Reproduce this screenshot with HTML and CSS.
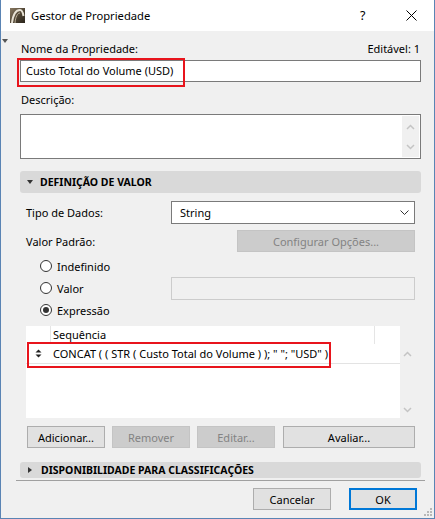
FILE: index.html
```html
<!DOCTYPE html>
<html lang="pt">
<head>
<meta charset="utf-8">
<title>Gestor de Propriedade</title>
<link rel="stylesheet" href="styles.css">
</head>
<body>
<div class="window">
  <div class="titlebar">
    <svg class="app-icon" width="15" height="15" viewBox="0 0 15 15">
      <defs>
        <linearGradient id="ig" x1="0" y1="0" x2="1" y2="1">
          <stop offset="0" stop-color="#8a7a62"/>
          <stop offset="0.6" stop-color="#4a4030"/>
          <stop offset="1" stop-color="#2a241c"/>
        </linearGradient>
      </defs>
      <rect x="0" y="0" width="15" height="15" fill="url(#ig)"/>
      <path d="M2 15 C3 7 6 2 10 2 C12 2 13 5 13.5 8" fill="none" stroke="#e8e2d4" stroke-width="2"/>
      <path d="M5 15 C5.5 9 7.5 5 10 5" fill="none" stroke="#b8ad98" stroke-width="1"/>
    </svg>
    <span class="title">Gestor de Propriedade</span>
    <span class="help">?</span>
    <svg class="close" width="11" height="11" viewBox="0 0 11 11">
      <path d="M0.5 0.5 L10.5 10.5 M10.5 0.5 L0.5 10.5" stroke="#000" stroke-width="1"/>
    </svg>
  </div>

  <div class="content">
    <span class="collapse-tri"></span>

    <div class="label-row">
      <span>Nome da Propriedade:</span>
      <span>Editável: 1</span>
    </div>
    <div class="input">
      <span>Custo Total do Volume (USD)</span>
      <span class="hl hl-name"></span>
    </div>

    <div class="label desc-label">Descrição:</div>
    <div class="textarea">
      <div class="vscroll">
        <svg width="9" height="6" viewBox="0 0 9 6"><path d="M1 5 L4.5 1.5 L8 5" fill="none" stroke="#c4c4c4" stroke-width="1.5"/></svg>
        <svg width="9" height="6" viewBox="0 0 9 6"><path d="M1 1 L4.5 4.5 L8 1" fill="none" stroke="#c4c4c4" stroke-width="1.5"/></svg>
      </div>
    </div>

    <div class="section section-open">
      <span class="tri-down"></span>
      <span>DEFINIÇÃO DE VALOR</span>
    </div>

    <div class="section-body">
      <div class="form-row row-type">
        <span class="form-label">Tipo de Dados:</span>
        <div class="select">
          <span>String</span>
          <svg width="9" height="6" viewBox="0 0 9 6"><path d="M0.5 0.5 L4.5 4.5 L8.5 0.5" fill="none" stroke="#333" stroke-width="1"/></svg>
        </div>
      </div>
      <div class="form-row row-default">
        <span class="form-label">Valor Padrão:</span>
        <span class="btn btn-disabled btn-config">Configurar Opções...</span>
      </div>

      <div class="radios">
        <div class="radio-row">
          <span class="radio-opt"><span class="radio"></span>Indefinido</span>
        </div>
        <div class="radio-row">
          <span class="radio-opt"><span class="radio"></span>Valor</span>
          <span class="field-disabled"></span>
        </div>
        <div class="radio-row">
          <span class="radio-opt"><span class="radio radio-on"></span>Expressão</span>
        </div>
      </div>

      <div class="list">
        <div class="list-main">
          <div class="list-head">
            <span class="col-icon"></span>
            <span class="col-seq">Sequência</span>
            <span class="col-end"></span>
          </div>
          <div class="list-row">
            <span class="col-icon sort">
              <svg width="7" height="9" viewBox="0 0 7 9">
                <path d="M0.5 3.5 L3.5 0.5 L6.5 3.5 Z" fill="#222"/>
                <path d="M0.5 5.5 L3.5 8.5 L6.5 5.5 Z" fill="#222"/>
              </svg>
            </span>
            <span class="col-seq">CONCAT ( ( STR ( Custo Total do Volume ) ); " "; "USD" )</span>
            <span class="hl hl-row"></span>
          </div>
        </div>
        <div class="list-scroll">
          <svg width="9" height="6" viewBox="0 0 9 6"><path d="M1 5 L4.5 1.5 L8 5" fill="none" stroke="#c4c4c4" stroke-width="1.5"/></svg>
          <svg width="9" height="6" viewBox="0 0 9 6"><path d="M1 1 L4.5 4.5 L8 1" fill="none" stroke="#c4c4c4" stroke-width="1.5"/></svg>
        </div>
      </div>

      <div class="btn-row">
        <span class="btn btn-small">Adicionar...</span>
        <span class="btn btn-small btn-disabled">Remover</span>
        <span class="btn btn-small btn-disabled">Editar...</span>
        <span class="btn btn-wide">Avaliar...</span>
      </div>
    </div>

    <div class="section section-closed">
      <span class="tri-right"></span>
      <span>DISPONIBILIDADE PARA CLASSIFICAÇÕES</span>
    </div>

    <div class="separator"></div>

    <div class="footer">
      <span class="btn btn-cancel">Cancelar</span>
      <span class="btn btn-ok">OK</span>
    </div>

    <svg class="grip" width="9" height="9" viewBox="0 0 9 9">
      <rect x="6" y="0" width="2" height="2" fill="#b8b8b8"/>
      <rect x="3" y="3" width="2" height="2" fill="#b8b8b8"/>
      <rect x="6" y="3" width="2" height="2" fill="#b8b8b8"/>
      <rect x="0" y="6" width="2" height="2" fill="#b8b8b8"/>
      <rect x="3" y="6" width="2" height="2" fill="#b8b8b8"/>
      <rect x="6" y="6" width="2" height="2" fill="#b8b8b8"/>
    </svg>
  </div>
</div>
</body>
</html>
```

FILE: styles.css
```css
* { box-sizing: border-box; }

html, body {
  margin: 0;
  padding: 0;
  background: #f0f0f0;
}

body {
  font-family: "Noto Sans", "Open Sans", "DejaVu Sans", sans-serif;
  font-size: 11px;
  color: #000;
}

.window {
  width: 435px;
  height: 519px;
  border-left: 1px solid #5a84b4;
  border-right: 1px solid #5a84b4;
  border-bottom: 1px solid #5a84b4;
  background: #f0f0f0;
  display: flex;
  flex-direction: column;
  overflow: hidden;
}

/* Title bar */
.titlebar {
  height: 31px;
  background: #fff;
  display: flex;
  align-items: center;
  padding-left: 9px;
  flex: none;
}
.app-icon { flex: none; }
.title {
  margin-left: 6px;
  font-size: 11.2px;
  line-height: 16px;
}
.help {
  margin-left: auto;
  font-size: 12.5px;
  width: 10px;
}
.close {
  margin-left: 36px;
  margin-right: 17px;
}

/* Content */
.content {
  position: relative;
  flex: 1;
  padding: 0 13px 0 19px;
  display: flex;
  flex-direction: column;
}

.collapse-tri {
  position: absolute;
  left: 1px;
  top: 8px;
  width: 0;
  height: 0;
  border-left: 3.5px solid transparent;
  border-right: 3.5px solid transparent;
  border-top: 4px solid #555;
}

.label-row {
  margin-top: 10px;
  height: 16px;
  line-height: 16px;
  display: flex;
  justify-content: space-between;
  padding-left: 1px;
  padding-right: 1px;
}

.input {
  position: relative;
  margin-top: 3px;
  height: 22px;
  background: #fff;
  border: 1px solid #7a7a7a;
  padding-left: 5px;
  line-height: 20px;
}

.hl {
  position: absolute;
  border: 2px solid #e8141c;
  pointer-events: none;
}
.hl-name {
  left: -4px;
  top: -3px;
  width: 168px;
  height: 29px;
}

.label {
  height: 16px;
  line-height: 16px;
  padding-left: 1px;
}
.desc-label { margin-top: 10px; }

.textarea {
  margin-top: 6px;
  height: 45px;
  background: #fff;
  border: 1px solid #7a7a7a;
  display: flex;
  justify-content: flex-end;
}
.vscroll {
  width: 17px;
  background: #f0f0f0;
  margin: 1px 1px 1px 0;
  display: flex;
  flex-direction: column;
  justify-content: space-between;
  align-items: center;
  padding: 8px 0 7px;
}

/* Sections */
.section {
  background: #d9d9d9;
  border-radius: 3px;
  display: flex;
  align-items: center;
  font-weight: bold;
  font-size: 10.5px;
  padding-left: 7px;
  gap: 7px;
}
.section-open {
  margin-top: 12px;
  height: 22px;
}
.section-closed {
  margin-top: 14px;
  height: 16px;
}
.tri-down {
  width: 0;
  height: 0;
  border-left: 3.5px solid transparent;
  border-right: 3.5px solid transparent;
  border-top: 4px solid #333;
}
.tri-right {
  width: 0;
  height: 0;
  border-top: 3.5px solid transparent;
  border-bottom: 3.5px solid transparent;
  border-left: 4px solid #333;
  margin-left: 1px;
  margin-right: 2px;
}

.section-body {
  padding: 0 6px;
  display: flex;
  flex-direction: column;
}

.form-row {
  display: flex;
  align-items: center;
}
.form-label { width: 145px; flex: none; }
.row-type { margin-top: 8px; height: 23px; }
.select {
  flex: 1;
  height: 23px;
  background: #fff;
  border: 1px solid #7a7a7a;
  display: flex;
  align-items: center;
  justify-content: space-between;
  padding: 0 5px 0 8px;
}
.row-default {
  margin-top: 6px;
  height: 22px;
  justify-content: space-between;
}

.btn {
  display: flex;
  align-items: center;
  justify-content: center;
  height: 22px;
  background: #e1e1e1;
  border: 1px solid #adadad;
}
.btn-disabled {
  background: #cccccc;
  border-color: #c4c4c4;
  color: #838383;
}
.btn-config { width: 178px; }

.radios {
  margin-top: 3px;
  display: flex;
  flex-direction: column;
}
.radio-row {
  height: 22px;
  display: flex;
  align-items: center;
}
.radio-opt {
  width: 145px;
  flex: none;
  display: flex;
  align-items: center;
  padding-left: 14px;
}
.radio {
  width: 12px;
  height: 12px;
  border: 1px solid #333;
  border-radius: 50%;
  background: #fff;
  margin-right: 5px;
  display: flex;
  align-items: center;
  justify-content: center;
}
.radio-on::after {
  content: "";
  width: 6px;
  height: 6px;
  border-radius: 50%;
  background: #333;
}
.field-disabled {
  flex: 1;
  height: 23px;
  border: 1px solid #cccccc;
  background: #f0f0f0;
}

/* List */
.list {
  margin-top: 5px;
  height: 92px;
  display: flex;
}
.list-main {
  width: 374px;
  background: #fff;
  display: flex;
  flex-direction: column;
}
.list-head {
  height: 18px;
  display: flex;
  line-height: 18px;
  margin-right: 2px;
}
.col-icon {
  width: 25px;
  flex: none;
  border-right: 1px solid #e5e5e5;
}
.list-row .col-icon { border-right: none; }
.col-seq {
  flex: 1;
  padding-left: 2px;
  border-right: 1px solid #e5e5e5;
}
.list-row .col-seq { border-right: none; }
.col-end { width: 23px; flex: none; }
.list-row {
  position: relative;
  height: 20px;
  display: flex;
  align-items: center;
  border-bottom: 1px solid #e3e3e3;
}
.sort {
  display: flex;
  align-items: center;
  justify-content: center;
  padding-right: 1px;
}
.hl-row {
  left: 1px;
  top: -2px;
  width: 304px;
  height: 26px;
}
.list-scroll {
  flex: 1;
  display: flex;
  flex-direction: column;
  justify-content: space-between;
  align-items: center;
  padding: 25px 0 5px;
}

.btn-row {
  margin-top: 8px;
  display: flex;
  gap: 7px;
  padding-left: 1px;
}
.btn-small { width: 78px; }
.btn-wide { flex: 1; margin-left: 1px; }

.separator {
  margin: 2px -4px 0 -4px;
  height: 1px;
  background: #a0a0a0;
}

.footer {
  margin-top: 7px;
  display: flex;
  justify-content: flex-end;
  gap: 18px;
  padding-right: 4px;
}
.btn-cancel { width: 78px; }
.btn-ok {
  width: 68px;
  border: 2px solid #0078d7;
}

.grip {
  position: absolute;
  right: 1px;
  bottom: 1px;
}
```
